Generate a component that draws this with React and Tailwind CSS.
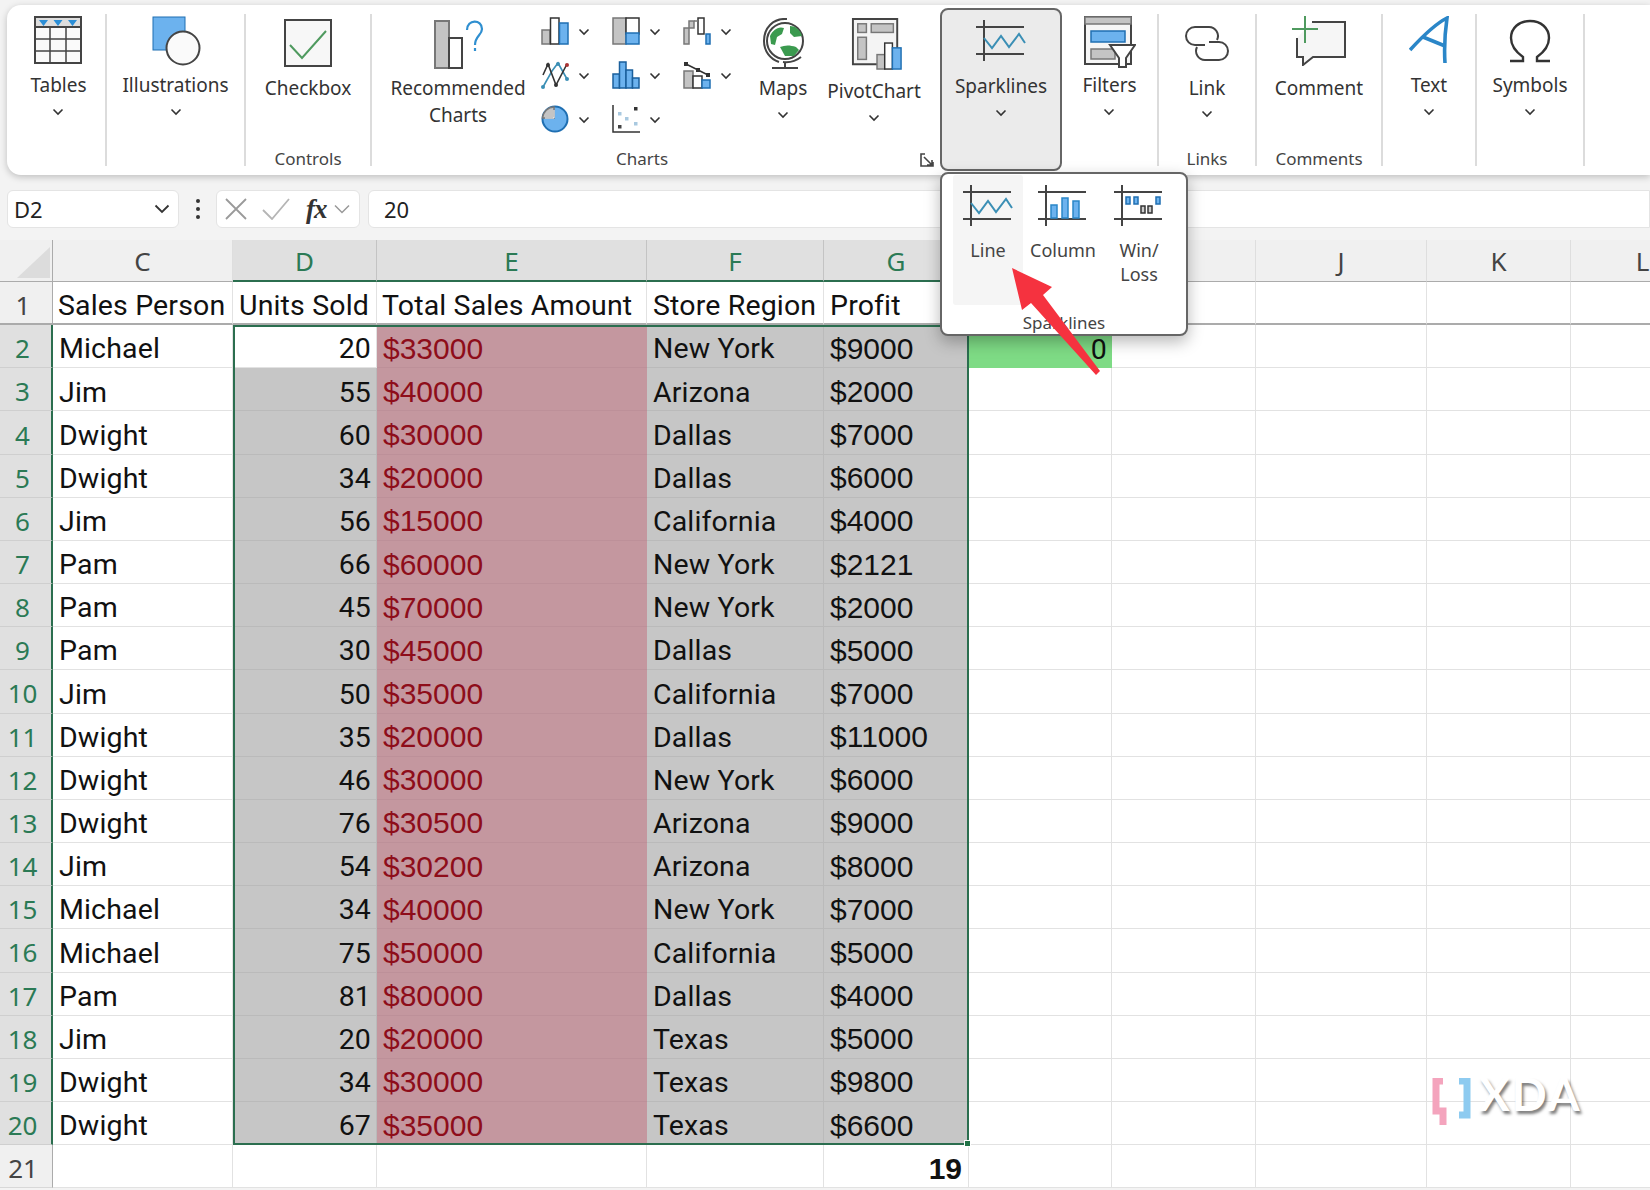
const Chev = ({ className = "" }) => (
  <svg viewBox="0 0 12 8" className={"w-[12px] h-[8px] " + className} fill="none" stroke="#333" strokeWidth="1.6">
    <path d="M1.5 1.5 6 6l4.500-4.500" />
  </svg>
);

const S = "#444";
const B = "#6cb2ee";
const BD = "#1f6fb2";
const G = "#c4c4c4";

const TablesIcon = () => (
  <svg viewBox="0 0 48 48" className="w-[48px] h-[48px] mt-[11px]" fill="none" stroke={S} strokeWidth="2">
    <rect x="1" y="1" width="46" height="46" fill="#fafafa" />
    <rect x="1" y="1" width="46" height="10" fill="#ddd" />
    <path d="M1 23h46M1 35h46M16 11v36M32 11v36" strokeWidth="1.500" />
    <path d="M5 4h9l-4.500 6zM19.500 4h9l-4.500 6zM34 4h9l-4.500 6z" fill="#2b8ed6" stroke="none" />
  </svg>
);
const IllusIcon = () => (
  <svg viewBox="0 0 50 50" className="w-[50px] h-[50px] mt-[11px] ml-[2px]">
    <rect x="1" y="1" width="32" height="33" fill={B} stroke={BD} strokeWidth="1" />
    <circle cx="31" cy="32" r="16.500" fill="#fafafa" stroke={S} strokeWidth="2" />
  </svg>
);
const CheckIcon = () => (
  <svg viewBox="0 0 48 48" className="w-[48px] h-[48px] mt-[14px]" fill="none">
    <rect x="1" y="1" width="46" height="46" fill="#f7f7f7" stroke={S} strokeWidth="2" />
    <path d="M6 26l12 13L42 12" stroke="#4f9a5f" strokeWidth="2" />
  </svg>
);
const RecIcon = () => (
  <svg viewBox="0 0 52 50" className="w-[52px] h-[50px] mt-[14px] ml-[4px]" fill="none">
    <rect x="1" y="2" width="14" height="47" fill={G} stroke="#777" strokeWidth="2" />
    <rect x="15" y="19" width="13" height="30" fill="#fff" stroke={S} strokeWidth="2" />
    <path d="M33 11c0-11 15-11 15-1 0 6-7 7-7 16M41 29v3" stroke="#2f8fd0" strokeWidth="2.200" />
  </svg>
);

const small = "w-[28px] h-[28px]";
const IcColumn = () => (
  <svg viewBox="0 0 28 28" className={small}>
    <rect x="1" y="13" width="8" height="14" fill={G} stroke="#777" strokeWidth="1.500" />
    <rect x="9.500" y="1" width="8.500" height="26" fill="#fff" stroke="#333" strokeWidth="1.500" />
    <rect x="18.500" y="6" width="8.500" height="21" fill={B} stroke={BD} strokeWidth="1.500" />
  </svg>
);
const IcTree = () => (
  <svg viewBox="0 0 28 28" className={small}>
    <rect x="1" y="1" width="13" height="26" fill={G} stroke="#777" strokeWidth="1.500" />
    <rect x="14" y="1" width="13" height="16" fill="#fff" stroke="#333" strokeWidth="1.500" />
    <rect x="14" y="16" width="13" height="11" fill={B} stroke={BD} strokeWidth="1.500" />
  </svg>
);
const IcWater = () => (
  <svg viewBox="0 0 28 28" className={small} fill="none" strokeWidth="1.500">
    <path d="M1 27V11h5V4h5v7H6v16z" fill={G} stroke="#777" />
    <path d="M15 1h6v16h-6z" fill="#fff" stroke="#333" />
    <path d="M11 4h4" stroke="#777" />
    <path d="M23 17h4v10h-4z" fill={B} stroke={BD} />
  </svg>
);
const IcLine = () => (
  <svg viewBox="0 0 28 28" className={small} fill="none" strokeWidth="1.600">
    <path d="M2 26 11 10l6-8 9 16" stroke="#3b8fb5" />
    <path d="M2 14 7 3l8 21L26 3" stroke="#333" />
    <circle cx="2" cy="26" r="2" fill="#3b8fb5" />
    <circle cx="26" cy="18" r="2" fill="#3b8fb5" />
    <circle cx="17" cy="3" r="2" fill="#3b8fb5" />
    <circle cx="15" cy="24" r="2" fill="#333" />
    <circle cx="7" cy="4" r="2" fill="#333" />
    <circle cx="26" cy="4" r="2" fill="#a33" />
  </svg>
);
const IcHist = () => (
  <svg viewBox="0 0 28 28" className={small} stroke="#1a5f9c" strokeWidth="1.500" fill={B}>
    <rect x="1" y="13" width="6.500" height="14" />
    <rect x="7.500" y="1" width="6.500" height="26" />
    <rect x="14" y="9" width="6.500" height="18" />
    <rect x="20.500" y="17" width="6.500" height="10" />
  </svg>
);
const IcCombo = () => (
  <svg viewBox="0 0 28 28" className={small} fill="none">
    <rect x="1" y="10" width="9" height="17" fill={G} stroke="#777" strokeWidth="1.500" />
    <rect x="10" y="15" width="9" height="12" fill="#fff" stroke="#333" strokeWidth="1.500" />
    <rect x="19" y="19" width="8" height="8" fill={B} stroke={BD} strokeWidth="1.500" />
    <path d="M3 3l12 6 10 5" stroke="#333" strokeWidth="1.500" />
    <path d="M1 1h4v4H1zM13 7h4v4h-4zM23 12h4v4h-4z" fill="#333" />
  </svg>
);
const IcPie = () => (
  <svg viewBox="0 0 28 28" className={small}>
    <circle cx="14" cy="14" r="12.500" fill={B} stroke={BD} strokeWidth="2" />
    <path d="M13 2v11H1.500C2 7 7 2 13 2z" fill={G} stroke="#777" strokeWidth="1.500" />
    <path d="M13 5v8H4" fill="none" stroke="#fff" strokeWidth="1" />
  </svg>
);
const IcScatter = () => (
  <svg viewBox="0 0 28 28" className={small}>
    <path d="M1 0v27h27" fill="none" stroke="#333" strokeWidth="1.500" />
    <rect x="6" y="20" width="3.500" height="3.500" fill="#444" />
    <rect x="22" y="2" width="3.500" height="3.500" fill="#333" />
    <rect x="6" y="7" width="3.500" height="3.500" fill="#a9c9e0" />
    <rect x="13" y="12" width="3.500" height="3.500" fill="#a9c9e0" />
    <rect x="22" y="17" width="3.500" height="3.500" fill="#a9c9e0" />
  </svg>
);

const GlobeIcon = () => (
  <svg viewBox="0 0 42 52" className="w-[42px] h-[52px] mt-[13px] ml-[2px]" fill="none">
    <path d="M24 1C10 0 1 10 1 23c0 10 6 18 15 21" stroke={S} strokeWidth="2" />
    <path d="M20 44c8 1 13-1 18-5" stroke={S} strokeWidth="2" />
    <path d="M22 44v6M9 50h26" stroke={S} strokeWidth="2" />
    <circle cx="22" cy="23" r="18" fill="#fff" stroke={S} strokeWidth="2" />
    <path d="M7 18c3-6 8-10 14-8l-2 6-5 3-2 8-4-1z" fill="#3b9a4f" />
    <path d="M27 8c5 0 10 3 12 10l-8 1-4-4z" fill="#3b9a4f" />
    <path d="M17 29c5-2 10-2 16 0l3 3-5 6-9 0z" fill="#3b9a4f" />
  </svg>
);
const PivotIcon = () => (
  <svg viewBox="0 0 52 54" className="w-[52px] h-[52px] mt-[13px] ml-[5px]" fill="none">
    <path d="M1 1h46v47H1z" fill="#f4f4f4" stroke={S} strokeWidth="2" />
    <rect x="6" y="6" width="9" height="9" fill={G} stroke="#777" strokeWidth="1.500" />
    <rect x="20" y="6" width="23" height="9" fill={G} stroke="#777" strokeWidth="1.500" />
    <rect x="6" y="20" width="9" height="23" fill={G} stroke="#777" strokeWidth="1.500" />
    <rect x="26" y="38" width="8" height="15" fill={G} stroke="#777" strokeWidth="1.500" />
    <rect x="34" y="26" width="8" height="27" fill="#fff" stroke="#333" strokeWidth="1.500" />
    <rect x="42" y="31" width="9" height="22" fill={B} stroke={BD} strokeWidth="1.500" />
  </svg>
);
const Axes = () => (
  <path d="M0 7h48M0 34h48M8 0v41" stroke="#444" strokeWidth="2" fill="none" />
);
const SparkLine = ({ className = "" }) => (
  <svg viewBox="0 0 50 41" className={"w-[50px] h-[41px] " + className}>
    <Axes />
    <path d="M8 18l8 10 9-12 8 11 10-13 6 9" stroke="#3b8fb5" strokeWidth="2" fill="none" />
  </svg>
);
const SparkCol = () => (
  <svg viewBox="0 0 50 41" className="w-[50px] h-[41px]">
    <Axes />
    <g fill={B} stroke="#2a86c8" strokeWidth="1.500">
      <rect x="13" y="20" width="6" height="13" />
      <rect x="24" y="13" width="6" height="20" />
      <rect x="35" y="16" width="6" height="17" />
    </g>
  </svg>
);
const SparkWin = () => (
  <svg viewBox="0 0 50 41" className="w-[50px] h-[41px]">
    <Axes />
    <g fill={B} stroke="#1f6fb2" strokeWidth="1.500">
      <rect x="12" y="12" width="4" height="7" />
      <rect x="20" y="12" width="4" height="7" />
      <rect x="42" y="12" width="4" height="7" />
    </g>
    <g fill="#ccc" stroke="#333" strokeWidth="1.500">
      <rect x="27" y="21" width="4" height="7" />
      <rect x="34" y="21" width="4" height="7" />
    </g>
  </svg>
);
const FilterIcon = () => (
  <svg viewBox="0 0 52 52" className="w-[52px] h-[52px] mt-[11px] ml-[2px]" fill="none">
    <path d="M1 1h46v47H1z" fill="#f6f6f6" stroke={S} strokeWidth="2" />
    <rect x="1" y="1" width="46" height="7" fill={G} stroke="#777" strokeWidth="1.500" />
    <rect x="7" y="15" width="34" height="11" fill={B} stroke={BD} strokeWidth="1.500" />
    <rect x="7" y="33" width="24" height="10" fill={G} stroke="#777" strokeWidth="1.500" />
    <path d="M26 29h25l-9 13v9h-7v-9z" fill="#fff" stroke={S} strokeWidth="2" />
  </svg>
);
const LinkIcon = () => (
  <svg viewBox="0 0 48 36" className="w-[48px] h-[36px] mt-[21px]" fill="none" stroke={S} strokeWidth="2">
    <path d="M22 19H12a9 9 0 0 1 0-18h14a9 9 0 0 1 8 13" />
    <path d="M26 16h10a9 9 0 0 1 0 18H22a9 9 0 0 1-8-13" />
  </svg>
);
const CommentIcon = () => (
  <svg viewBox="0 0 54 50" className="w-[54px] h-[50px] mt-[11px]" fill="none">
    <path d="M20 6h33v35H21l-10 8v-8H5V22" fill="#f6f6f6" stroke={S} strokeWidth="2" />
    <path d="M0 13h26M13 0v27" stroke="#4f9a5f" strokeWidth="2" />
  </svg>
);
const TextAIcon = () => (
  <svg viewBox="0 0 40 48" className="w-[40px] h-[48px] mt-[11px]" fill="none" stroke="#2a86c8" strokeWidth="3.600">
    <path d="M1 34C12 22 26 8 38 2c-2 14-3 30-2 45" />
    <path d="M14 21l22 9" />
  </svg>
);
const OmegaIcon = () => (
  <svg viewBox="0 0 42 44" className="w-[42px] h-[44px] mt-[14px]" fill="none" stroke="#333" strokeWidth="2.400">
    <path d="M1 42h13v-4C7 33 2 26 2 19 2 9 10 2 21 2s19 7 19 17c0 7-5 14-12 19v4h13" />
  </svg>
);

const Tool = ({ icon, label, zone, chev = true, chevCls = "mt-[9px]" }) => (
  <div className="flex flex-col items-center">
    <div className={"flex justify-center items-start " + zone}>{icon}</div>
    <div className="text-center text-[19px] leading-[27px] text-[#333] whitespace-pre-line">{label}</div>
    {chev && <Chev className={chevCls} />}
  </div>
);

const Group = ({ w, caption, children, className = "" }) => (
  <div className={"h-full flex flex-col items-center shrink-0 relative " + w + " " + className}>
    <div className="flex-1">{children}</div>
    {caption && <div className="text-[17px] leading-[22px] text-[#444] mb-[5px]">{caption}</div>}
  </div>
);
const Sep = () => <div className="w-[2px] shrink-0 h-[152px] mt-[9px] bg-[#dcdcdc]" />;

const miniItems = [
  <IcColumn />, <IcTree />, <IcWater />,
  <IcLine />, <IcHist />, <IcCombo />,
  <IcPie />, <IcScatter />, null,
];

const Ribbon = () => (
  <div className="ml-[7px] mt-[5px] h-[170px] bg-white rounded-l-[14px] shadow-[0_2px_7px_rgba(0,0,0,0.22)] flex">
    <Group w="w-[98px]" className="pl-[5px]"><Tool zone="h-[67px]" icon={<TablesIcon />} label="Tables" /></Group>
    <Sep />
    <Group w="w-[137px]"><Tool zone="h-[67px]" icon={<IllusIcon />} label="Illustrations" /></Group>
    <Sep />
    <Group w="w-[124px]" caption="Controls"><Tool zone="h-[70px]" icon={<CheckIcon />} label="Checkbox" chev={false} /></Group>
    <Sep />
    <div className="w-[568px] h-full flex shrink-0 relative">
      <div className="w-[168px] pl-[4px] shrink-0">
        <Tool zone="h-[70px]" icon={<RecIcon />} label={"Recommended\nCharts"} chev={false} />
      </div>
      <div className="grid grid-cols-[71px_71px_71px] auto-rows-[44px] pt-[12px] ml-[1px] w-[213px] shrink-0">
        {miniItems.map((m, i) => (
          <div key={i} className="flex items-start gap-[9px]">
            {m}
            {m && <Chev className="mt-[11px]" />}
          </div>
        ))}
      </div>
      <div className="w-[56px] ml-[1px] shrink-0"><Tool zone="h-[70px]" icon={<GlobeIcon />} label="Maps" /></div>
      <div className="w-[110px] ml-[8px] shrink-0"><Tool zone="h-[73px]" icon={<PivotIcon />} label="PivotChart" /></div>
      <div className="absolute left-[270px] bottom-[5px] text-[17px] leading-[22px] text-[#444] -translate-x-1/2">Charts</div>
      <svg viewBox="0 0 14 14" className="absolute right-[6px] bottom-[8px] w-[14px] h-[14px]" fill="none" stroke="#444" strokeWidth="1.600">
        <path d="M13 9v4H1V1h4M4 4l8 8M7 12h5V7" />
      </svg>
    </div>
    <div className="w-[122px] h-[163px] mt-[3px] shrink-0 bg-[#ebebeb] border-2 border-[#666] rounded-[8px] flex flex-col items-center">
      <Tool zone="h-[63px]" icon={<SparkLine className="mt-[10px]" />} label="Sparklines" />
    </div>
    <Group w="w-[95px]"><Tool zone="h-[67px]" icon={<FilterIcon />} label="Filters" /></Group>
    <Sep />
    <Group w="w-[96px]" caption="Links"><Tool zone="h-[70px]" icon={<LinkIcon />} label="Link" chevCls="mt-[8px]" /></Group>
    <Sep />
    <Group w="w-[124px]" caption="Comments"><Tool zone="h-[70px]" icon={<CommentIcon />} label="Comment" chev={false} /></Group>
    <Sep />
    <Group w="w-[92px]"><Tool zone="h-[67px]" icon={<TextAIcon />} label="Text" /></Group>
    <Sep />
    <Group w="w-[106px]"><Tool zone="h-[67px]" icon={<OmegaIcon />} label="Symbols" /></Group>
    <Sep />
  </div>
);

const FormulaBar = () => (
  <div className="flex items-center h-[38px] mt-[15px] pl-[7px]">
    <div className="w-[172px] h-full bg-white rounded-[6px] border border-[#e4e4e4] flex items-center justify-between pl-[6px] pr-[8px]">
      <span className="text-[22px] text-[#222]">D2</span>
      <svg viewBox="0 0 16 10" className="w-[16px] h-[10px]" fill="none" stroke="#333" strokeWidth="1.800"><path d="M1.500 1.500 8 8l6.500-6.500" /></svg>
    </div>
    <div className="w-[37px] flex flex-col items-center gap-[4px]">
      <div className="w-[4px] h-[4px] rounded-full bg-[#333]" />
      <div className="w-[4px] h-[4px] rounded-full bg-[#333]" />
      <div className="w-[4px] h-[4px] rounded-full bg-[#333]" />
    </div>
    <div className="w-[144px] h-full bg-white rounded-[6px] border border-[#e4e4e4] flex items-center pl-[8px]">
      <svg viewBox="0 0 22 22" className="w-[22px] h-[22px]" fill="none" stroke="#9a9a9a" strokeWidth="1.800"><path d="M1 1l20 20M21 1 1 21" /></svg>
      <svg viewBox="0 0 28 22" className="w-[28px] h-[22px] ml-[15px]" fill="none" stroke="#b5b5b5" strokeWidth="1.800"><path d="M1 12l9 9L27 1" /></svg>
      <span className="ml-[16px] font-['Liberation_Serif'] italic font-bold text-[27px] leading-none text-[#333] tracking-[-1px]">fx</span>
      <svg viewBox="0 0 16 10" className="w-[16px] h-[10px] ml-[7px]" fill="none" stroke="#999" strokeWidth="1.500"><path d="M1 1.500 8 8.500l7-7" /></svg>
    </div>
    <div className="flex-1 ml-[8px] h-full bg-white rounded-l-[6px] border border-[#e4e4e4] flex items-center pl-[15px]">
      <span className="text-[22px] text-[#222]">20</span>
    </div>
  </div>
);

const cols = ["C", "D", "E", "F", "G", "H", "I", "J", "K", "L"];
const selCols = ["D", "E", "F", "G"];
const rows = [
  ["Michael", 20, "$33000", "New York", "$9000"],
  ["Jim", 55, "$40000", "Arizona", "$2000"],
  ["Dwight", 60, "$30000", "Dallas", "$7000"],
  ["Dwight", 34, "$20000", "Dallas", "$6000"],
  ["Jim", 56, "$15000", "California", "$4000"],
  ["Pam", 66, "$60000", "New York", "$2121"],
  ["Pam", 45, "$70000", "New York", "$2000"],
  ["Pam", 30, "$45000", "Dallas", "$5000"],
  ["Jim", 50, "$35000", "California", "$7000"],
  ["Dwight", 35, "$20000", "Dallas", "$11000"],
  ["Dwight", 46, "$30000", "New York", "$6000"],
  ["Dwight", 76, "$30500", "Arizona", "$9000"],
  ["Jim", 54, "$30200", "Arizona", "$8000"],
  ["Michael", 34, "$40000", "New York", "$7000"],
  ["Michael", 75, "$50000", "California", "$5000"],
  ["Pam", 81, "$80000", "Dallas", "$4000"],
  ["Jim", 20, "$20000", "Texas", "$5000"],
  ["Dwight", 34, "$30000", "Texas", "$9800"],
  ["Dwight", 67, "$35000", "Texas", "$6600"],
];

const aptos = "font-['Roboto'] text-[28.5px] tracking-[0.15px] text-[#111]";
const arial = "font-['Liberation_Sans'] text-[30px] pb-[3px]";
const plain = "border-r border-b border-[#e2e2e2] bg-white";
const cell = "flex items-center overflow-hidden min-w-0 whitespace-nowrap pt-[7px] ";
const rowHead = "flex items-center justify-center pt-[5px] pr-[6px] text-[26px] font-['Noto_Sans'] ";

const Sheet = () => (
  <div className="relative grid w-[1715px] grid-cols-[53px_180px_144px_270px_177px_145px_143px_144px_171px_144px_144px] grid-rows-[42px] auto-rows-[43.158px] mt-[12px] bg-white">
    <div className="relative bg-[#f0f0f0] border-b border-r border-[#ababab]">
      <div className="absolute left-[17px] top-[7px] w-[33px] h-[31px] bg-[#dcdcdc] [clip-path:polygon(100%_0,100%_100%,0_100%)]" />
    </div>
    {cols.map((c) => (
      <div
        key={c}
        className={
          "flex items-center justify-center pt-[2px] text-[26px] font-['Noto_Sans'] " +
          (selCols.includes(c)
            ? "bg-[#e0e0e0] text-[#2b7a55] border-r border-[#c4c4c4] border-b-[2px] border-b-[#2b6e4f]"
            : "bg-[#f0f0f0] text-[#444] border-r border-[#dedede] border-b border-b-[#ababab]")
        }
      >
        {c}
      </div>
    ))}

    <div className={rowHead + "bg-[#f0f0f0] text-[#444] border-r border-[#ababab] border-b-2 border-b-[#ababab]"}>1</div>
    {[
      ["Sales Person", "pl-[5px]"],
      ["Units Sold", "pl-[6px]"],
      ["Total Sales Amount", "pl-[5px]"],
      ["Store Region", "pl-[6px]"],
      ["Profit", "pl-[6px]"],
      ["", ""], ["", ""], ["", ""], ["", ""], ["", ""],
    ].map(([t, p], i) => (
      <div key={i} className={cell + aptos + " " + p + " bg-white border-r border-[#e2e2e2] border-b-2 border-b-[#ababab]"}>{t}</div>
    ))}

    {rows.map((r, i) => (
      <div key={i} className="contents">
        <div className={rowHead + "bg-[#e0e0e0] text-[#2b7a55] border-r-2 border-[#2b6e4f] border-b border-b-[#cfcfcf]"}>{i + 2}</div>
        <div className={cell + aptos + " pl-[6px] " + plain}>{r[0]}</div>
        <div className={cell + aptos + " justify-end pr-[5px] " + (i === 0 ? plain : "bg-[#c6c6c6] border-r border-b border-[#bababa]")}>{r[1]}</div>
        <div className={cell + arial + " pl-[6px] bg-[#c4979f] text-[#8e0d1a] border-b border-[#bd9099]"}>{r[2]}</div>
        <div className={cell + aptos + " pl-[6px] bg-[#c6c6c6] border-r border-b border-[#bababa]"}>{r[3]}</div>
        <div className={cell + arial + " pl-[6px] text-[#111] bg-[#c6c6c6] border-r border-b border-[#bababa]"}>{r[4]}</div>
        {i === 0 ? (
          <div className={cell + aptos + " justify-end pr-[5px] bg-[#7edb85]"}>0</div>
        ) : (
          <div className={plain} />
        )}
        <div className={plain} />
        <div className={plain} />
        <div className={plain} />
        <div className={plain} />
      </div>
    ))}

    <div className={rowHead + "bg-[#f0f0f0] text-[#444] border-r border-b border-[#ababab] border-b-[#d8d8d8]"}>21</div>
    <div className={plain} />
    <div className={plain} />
    <div className={plain} />
    <div className={plain} />
    <div className={cell + arial + " justify-end pr-[6px] font-bold text-[#111] " + plain}>19</div>
    <div className={plain} /><div className={plain} /><div className={plain} /><div className={plain} /><div className={plain} />

    <div className="absolute inset-0 col-start-3 col-end-7 row-start-3 row-end-22 border-2 border-[#2b6e4f] pointer-events-none">
      <div className="absolute right-[-4px] bottom-[-4px] w-[7px] h-[7px] bg-[#217346] border border-white" />
    </div>
  </div>
);

const Dropdown = () => (
  <div className="absolute left-[940px] top-[172px] w-[248px] h-[164px] bg-white border-2 border-[#666] rounded-[8px] shadow-[0_6px_16px_rgba(0,0,0,0.28)]">
    <div className="flex pl-[11px] pt-[1px] h-[133px]">
      <div className="w-[70px] h-[130px] bg-[#f5f5f5] flex flex-col items-center pt-[10px] rounded-[3px]">
        <SparkLine />
        <div className="mt-[12px] text-[18px] leading-[24px] text-[#444]">Line</div>
      </div>
      <div className="w-[80px] flex flex-col items-center pt-[10px]">
        <SparkCol />
        <div className="mt-[12px] text-[18px] leading-[24px] text-[#444]">Column</div>
      </div>
      <div className="w-[72px] flex flex-col items-center pt-[10px]">
        <SparkWin />
        <div className="mt-[12px] text-[18px] leading-[24px] text-[#444] text-center whitespace-pre-line">{"Win/\nLoss"}</div>
      </div>
    </div>
    <div className="text-center text-[17px] leading-[22px] text-[#444] mt-[5px]">Sparklines</div>
  </div>
);

const Arrow = () => (
  <svg viewBox="1005 262 100 115" className="absolute left-[1005px] top-[262px] w-[100px] h-[115px] pointer-events-none">
    <polygon points="1012,268 1052,287 1043,295 1100,371 1096,375 1031,303 1022,310" fill="#f5323f" />
  </svg>
);

const Xda = () => (
  <div className="absolute left-[1431px] top-[1078px] flex items-start pointer-events-none">
    <svg viewBox="0 0 42 50" className="w-[42px] h-[50px]" fill="none" strokeWidth="7">
      <path d="M12 3H5v30l7 0v14" stroke="#f4a4bd" />
      <path d="M28 3h8v34h-8" stroke="#8ecbf0" />
    </svg>
    <span className="ml-[6px] mt-[-4px] font-['Lato'] font-bold text-[46px] leading-[40px] tracking-[2px] text-white [text-shadow:2px_3px_3px_rgba(0,0,0,0.5)]">XDA</span>
  </div>
);

export default function App() {
  return (
    <div className="relative w-[1650px] h-[1190px] overflow-hidden bg-[#f3f3f3] font-['Noto_Sans',sans-serif]">
      <Ribbon />
      <FormulaBar />
      <Sheet />
      <Dropdown />
      <Arrow />
      <Xda />
    </div>
  );
}
